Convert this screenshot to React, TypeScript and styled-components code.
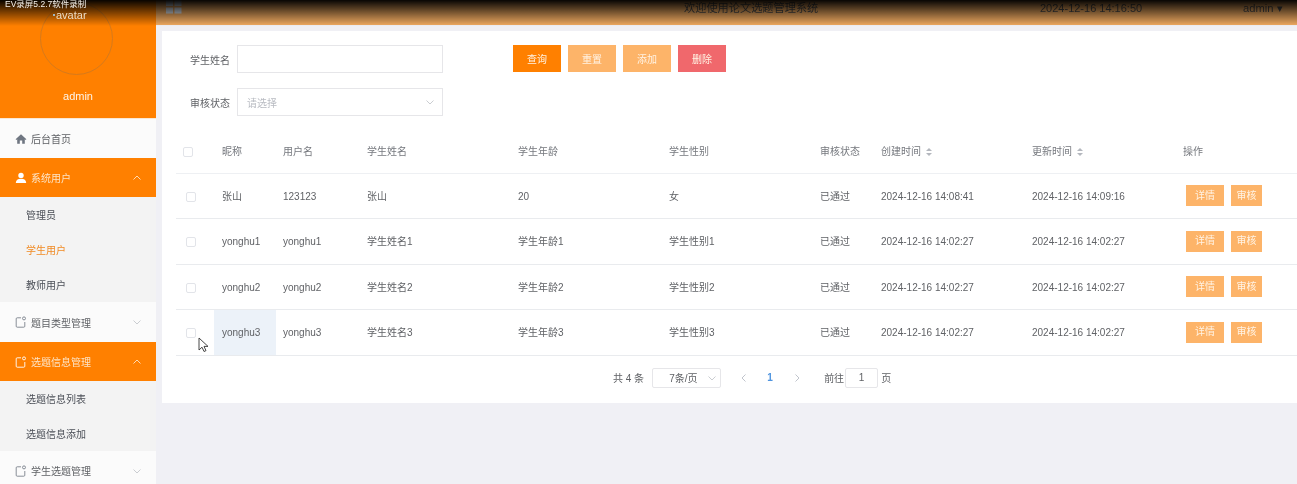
import styled, { createGlobalStyle } from 'styled-components';

const orange = '#ff8000';
const soft = '#fdb469';

const GlobalStyle = createGlobalStyle`
  html, body { margin: 0; padding: 0; background: #f0f0f5; }
  body {
    font-family: "Liberation Sans", "Noto Sans CJK SC", sans-serif;
    font-size: 10px;
    color: #606266;
    overflow: hidden;
  }
`;

const Page = styled.div`
  position: relative;
  display: flex;
  width: 1297px;
  height: 484px;
  overflow: hidden;
  background: #f0f0f5;
  filter: blur(0.4px);
`;

const TopShade = styled.div`
  position: absolute;
  left: 0;
  right: 0;
  top: 0;
  height: 26px;
  background: linear-gradient(to bottom, rgba(0, 0, 0, 0.97), rgba(0, 0, 0, 0));
  pointer-events: none;
`;

const RecorderMark = styled.div`
  position: absolute;
  left: 5px;
  top: 0;
  font-size: 8.5px;
  line-height: 8px;
  color: #f4f0ea;
`;

const CursorMark = styled.svg`
  position: absolute;
  left: 198px;
  top: 337px;
`;

const Sidebar = styled.aside`
  flex: none;
  width: 156px;
  height: 100%;
  background: #fff;
`;

const Profile = styled.div`
  position: relative;
  height: 118px;
  background: ${orange};
  border-bottom: 1px solid #fbe7d2;
  box-sizing: content-box;
`;

const Avatar = styled.div`
  position: absolute;
  left: 40px;
  top: 2px;
  box-sizing: border-box;
  width: 73px;
  height: 73px;
  border: 1px solid #d67a1c;
  border-radius: 50%;
`;

// the avatar image is broken in the picture: a small marker and its alt text
const AvatarAlt = styled.div`
  position: absolute;
  left: 53px;
  top: 8px;
  display: flex;
  align-items: center;
  gap: 1px;
  font-size: 11px;
  line-height: 14px;
  color: #ecdcc4;
  &::before {
    content: '';
    width: 2px;
    height: 2px;
    background: #9fb7c4;
  }
`;

const ProfileName = styled.div`
  position: absolute;
  left: 0;
  right: 0;
  top: 89px;
  text-align: center;
  font-size: 11px;
  line-height: 14px;
  color: #fff4e6;
`;

const MenuItem = styled.div<{ $active?: boolean; $tall?: boolean }>`
  display: flex;
  align-items: center;
  height: ${(p) => (p.$tall ? 40 : 39)}px;
  padding: 0 14px 0 15px;
  gap: 4px;
  background: ${(p) => (p.$active ? orange : '#fbfbfb')};
  color: ${(p) => (p.$active ? '#fde4c6' : '#606266')};
  svg { flex: none; }
`;

const MenuLabel = styled.span`
  flex: 1;
`;

const SubMenu = styled.div`
  background: #f3f3f3;
`;

const SubItem = styled.div<{ $current?: boolean }>`
  height: 35px;
  line-height: 37px;
  padding-left: 26px;
  color: ${(p) => (p.$current ? '#f08a24' : '#4b4f57')};
`;

const Main = styled.main`
  flex: 1;
  min-width: 0;
`;

const Header = styled.header`
  display: flex;
  align-items: flex-start;
  height: 25px;
  background: #f4ad62;
  color: #4c4c4c;
  font-size: 11.2px;
  line-height: 16px;
`;

const GridIcon = styled.svg`
  margin-left: 10px;
`;

const Title = styled.div`
  margin-left: 502px;
  width: 135px;
  white-space: nowrap;
`;

const Clock = styled.div`
  margin-left: 221px;
  width: 103px;
  font-size: 11px;
  white-space: nowrap;
`;

const HeaderUser = styled.div`
  margin-left: 100px;
  white-space: nowrap;
`;

const Card = styled.section`
  margin: 6px 0 0 6px;
  height: 372px;
  padding: 14px 0 0 14px;
  box-sizing: border-box;
  background: #fff;
`;

const SearchBar = styled.div`
  display: flex;
  align-items: flex-start;
  height: 71px;
`;

const SearchFields = styled.div`
  display: flex;
  flex-direction: column;
  gap: 15px;
  padding-left: 14px;
`;

const Field = styled.label`
  display: flex;
  align-items: center;
  gap: 7px;
  height: 28px;
  color: #606266;
`;

const TextBox = styled.div`
  display: flex;
  align-items: center;
  justify-content: space-between;
  box-sizing: border-box;
  width: 206px;
  height: 28px;
  padding: 0 7px 0 9px;
  border: 1px solid #e6e6e9;
  background: #fff;
  color: #b8bbc2;
`;

const Actions = styled.div`
  display: flex;
  gap: 7px;
  margin-left: 70px;
`;

const Button = styled.button<{ $bg: string }>`
  width: 48px;
  height: 27px;
  padding: 0;
  border: 0;
  background: ${(p) => p.$bg};
  color: #fff3e4;
  font: inherit;
`;

const Table = styled.table`
  width: 1121px;
  margin-top: 17px;
  border-collapse: collapse;
  table-layout: fixed;
`;

const Th = styled.th<{ $w: number; $pad?: number }>`
  width: ${(p) => p.$w}px;
  height: 40px;
  padding: 0 0 1px ${(p) => p.$pad ?? 7}px;
  box-sizing: border-box;
  border-bottom: 1px solid #eef0f3;
  text-align: left;
  font-weight: 400;
  line-height: 14px;
  color: #75787e;
`;

const Td = styled.td<{ $pad?: number; $hot?: boolean }>`
  height: 45.5px;
  padding: 2px 0 0 ${(p) => p.$pad ?? 7}px;
  box-sizing: border-box;
  border-bottom: 1px solid #e9ebee;
  background: ${(p) => (p.$hot ? '#ecf2f9' : 'transparent')};
  color: #606266;
  line-height: 14px;
  white-space: nowrap;
`;

const Check = styled.span`
  display: block;
  width: 10px;
  height: 10px;
  border: 1px solid #e2e4e9;
  border-radius: 2px;
  box-sizing: border-box;
  background: #fff;
`;

const SortLabel = styled.span`
  display: inline-flex;
  align-items: center;
  gap: 5px;
`;

const Caret = styled.span`
  display: inline-flex;
  flex-direction: column;
  gap: 2px;
  &::before, &::after {
    content: '';
    border-left: 3px solid transparent;
    border-right: 3px solid transparent;
  }
  &::before { border-bottom: 3px solid #b4b7be; }
  &::after { border-top: 3px solid #b4b7be; }
`;

const RowActions = styled.div`
  display: flex;
  gap: 7px;
  margin-top: -2px;
`;

const RowButton = styled.button<{ $w: number }>`
  width: ${(p) => p.$w}px;
  height: 21px;
  padding: 0;
  border: 0;
  background: ${soft};
  color: #fff3e4;
  font: inherit;
`;

const Pager = styled.div`
  display: flex;
  align-items: center;
  height: 20px;
  margin: 12px 0 0 437px;
  color: #606266;
`;

const PageSize = styled.div`
  display: flex;
  align-items: center;
  justify-content: space-between;
  box-sizing: border-box;
  width: 69px;
  height: 20px;
  margin: 0 0 0 8px;
  padding: 0 3px 0 16px;
  border: 1px solid #e6e6e9;
  border-radius: 2px;
`;

const PageArrow = styled.svg`
  margin-left: 19px;
`;

const PageNumber = styled.b`
  margin-left: 19px;
  width: 7px;
  color: #4f94df;
`;

const JumpLabel = styled.span`
  margin-left: 23px;
`;

const JumpBox = styled.div`
  box-sizing: border-box;
  width: 33px;
  height: 20px;
  margin: 0 3px 0 1px;
  border: 1px solid #e6e6e9;
  border-radius: 2px;
  text-align: center;
  line-height: 18px;
`;

const Chevron = ({ up, color = '#c4c7cc', size = 10 }: { up?: boolean; color?: string; size?: number }) => (
  <svg width={size} height={size} viewBox="0 0 10 10" fill="none" stroke={color} strokeWidth="0.9">
    <path d={up ? 'M1.5 6.5 5 3l3.5 3.5' : 'M1.5 3.5 5 7l3.5-3.5'} />
  </svg>
);

const HomeIcon = () => (
  <svg width="12" height="12" viewBox="0 0 12 12" fill="#6f7681">
    <path d="M6 1.2.6 6.2l.8.7.8-.7v4.6h2.6V7.6h2.4v3.2h2.6V6.2l.8.7.8-.7z" />
  </svg>
);

const UserIcon = () => (
  <svg width="12" height="12" viewBox="0 0 12 12" fill="#fff">
    <circle cx="6" cy="3.4" r="2.7" />
    <path d="M.8 11c0-2.900 2-4.300 5.200-4.300s5.200 1.400 5.200 4.300z" />
  </svg>
);

const DocIcon = ({ color }: { color: string }) => (
  <svg width="12" height="12" viewBox="0 0 12 12" fill="none" stroke={color} strokeWidth="0.9">
    <path d="M6 1.800H2.200a1 1 0 0 0-1 1v7.400a1 1 0 0 0 1 1h6.600a1 1 0 0 0 1-1V6" />
    <circle cx="9" cy="2.400" r="1.500" />
  </svg>
);

const rows = [
  { nick: '张山', user: '123123', name: '张山', age: '20', sex: '女', created: '2024-12-16 14:08:41', updated: '2024-12-16 14:09:16' },
  { nick: 'yonghu1', user: 'yonghu1', name: '学生姓名1', age: '学生年龄1', sex: '学生性别1', created: '2024-12-16 14:02:27', updated: '2024-12-16 14:02:27' },
  { nick: 'yonghu2', user: 'yonghu2', name: '学生姓名2', age: '学生年龄2', sex: '学生性别2', created: '2024-12-16 14:02:27', updated: '2024-12-16 14:02:27' },
  { nick: 'yonghu3', user: 'yonghu3', name: '学生姓名3', age: '学生年龄3', sex: '学生性别3', created: '2024-12-16 14:02:27', updated: '2024-12-16 14:02:27' },
];

const App = () => {
  return (
    <Page>
      <GlobalStyle />
      <Sidebar>
        <Profile>
          <Avatar />
          <ProfileName>admin</ProfileName>
        </Profile>
        <MenuItem>
          <HomeIcon />
          <MenuLabel>后台首页</MenuLabel>
        </MenuItem>
        <MenuItem $active>
          <UserIcon />
          <MenuLabel>系统用户</MenuLabel>
          <Chevron up color="#fde4c6" />
        </MenuItem>
        <SubMenu>
          <SubItem>管理员</SubItem>
          <SubItem $current>学生用户</SubItem>
          <SubItem>教师用户</SubItem>
        </SubMenu>
        <MenuItem $tall>
          <DocIcon color="#7b818b" />
          <MenuLabel>题目类型管理</MenuLabel>
          <Chevron />
        </MenuItem>
        <MenuItem $active>
          <DocIcon color="#fff" />
          <MenuLabel>选题信息管理</MenuLabel>
          <Chevron up color="#fde4c6" />
        </MenuItem>
        <SubMenu>
          <SubItem>选题信息列表</SubItem>
          <SubItem>选题信息添加</SubItem>
        </SubMenu>
        <MenuItem>
          <DocIcon color="#7b818b" />
          <MenuLabel>学生选题管理</MenuLabel>
          <Chevron />
        </MenuItem>
      </Sidebar>

      <Main>
        <Header>
          <GridIcon width="16" height="14" viewBox="0 0 16 14" fill="#dfe7f0">
            <rect x="0" y="0" width="7" height="6" />
            <rect x="8.500" y="0" width="7" height="6" />
            <rect x="0" y="7.500" width="7" height="6" />
            <rect x="8.500" y="7.500" width="7" height="6" />
          </GridIcon>
          <Title>欢迎使用论文选题管理系统</Title>
          <Clock>2024-12-16 14:16:50</Clock>
          <HeaderUser>admin ▾</HeaderUser>
        </Header>

        <Card>
          <SearchBar>
            <SearchFields>
              <Field>
                学生姓名
                <TextBox />
              </Field>
              <Field>
                审核状态
                <TextBox>
                  请选择
                  <Chevron />
                </TextBox>
              </Field>
            </SearchFields>
            <Actions>
              <Button $bg={orange}>查询</Button>
              <Button $bg={soft}>重置</Button>
              <Button $bg={soft}>添加</Button>
              <Button $bg="#f0686c">删除</Button>
            </Actions>
          </SearchBar>

          <Table>
            <thead>
              <tr>
                <Th $w={38} $pad={7}><Check /></Th>
                <Th $w={62} $pad={8}>昵称</Th>
                <Th $w={84}>用户名</Th>
                <Th $w={151}>学生姓名</Th>
                <Th $w={151}>学生年龄</Th>
                <Th $w={151}>学生性别</Th>
                <Th $w={61}>审核状态</Th>
                <Th $w={151}><SortLabel>创建时间<Caret /></SortLabel></Th>
                <Th $w={151}><SortLabel>更新时间<Caret /></SortLabel></Th>
                <Th $w={121}>操作</Th>
              </tr>
            </thead>
            <tbody>
              {rows.map((row, i) => (
                <tr key={row.nick}>
                  <Td $pad={10}><Check /></Td>
                  <Td $pad={8} $hot={i === 3}>{row.nick}</Td>
                  <Td>{row.user}</Td>
                  <Td>{row.name}</Td>
                  <Td>{row.age}</Td>
                  <Td>{row.sex}</Td>
                  <Td>已通过</Td>
                  <Td>{row.created}</Td>
                  <Td>{row.updated}</Td>
                  <Td $pad={10}>
                    <RowActions>
                      <RowButton $w={38}>详情</RowButton>
                      <RowButton $w={31}>审核</RowButton>
                    </RowActions>
                  </Td>
                </tr>
              ))}
            </tbody>
          </Table>

          <Pager>
            共 4 条
            <PageSize>
              7条/页
              <Chevron />
            </PageSize>
            <PageArrow width="8" height="10" viewBox="0 0 8 10" fill="none" stroke="#c0c4cc">
              <path d="M5.500 1.500 2 5l3.500 3.500" />
            </PageArrow>
            <PageNumber>1</PageNumber>
            <PageArrow width="8" height="10" viewBox="0 0 8 10" fill="none" stroke="#c0c4cc">
              <path d="M2.500 1.500 6 5 2.500 8.500" />
            </PageArrow>
            <JumpLabel>前往</JumpLabel>
            <JumpBox>1</JumpBox>
            页
          </Pager>
        </Card>
      </Main>

      <TopShade />
      <AvatarAlt>avatar</AvatarAlt>
      <RecorderMark>EV录屏5.2.7软件录制</RecorderMark>
      <CursorMark width="12" height="16" viewBox="0 0 12 16">
        <path d="M1 1v12l3-2.800 2 4.300 2-.9-2-4.200h4z" fill="#fff" stroke="#333" strokeWidth="0.9" />
      </CursorMark>
    </Page>
  );
};

export default App;
